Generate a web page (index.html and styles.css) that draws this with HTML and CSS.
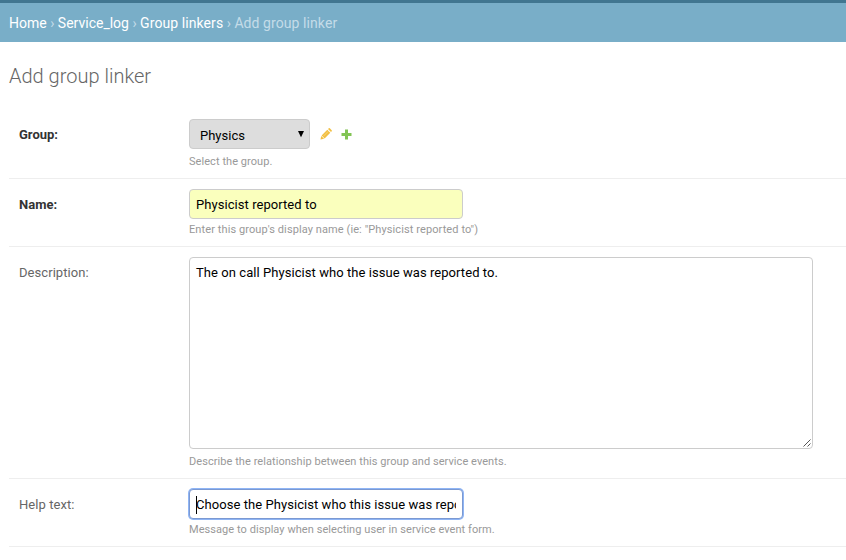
FILE: index.html
```html
<!DOCTYPE html>
<html lang="en">
<head>
<meta charset="utf-8">
<title>Add group linker</title>
<link rel="stylesheet" href="styles.css">
</head>
<body>
<nav class="breadcrumbs"><a>Home</a> › <a>Service_log</a> › <a class="parent">Group linkers</a> › <span class="current">Add group linker</span></nav>
<main>
<h1>Add group linker</h1>
<form>
<div class="row group-row">
  <label class="required">Group:</label>
  <div class="field">
    <div class="related">
      <div class="select"><span>Physics</span><svg width="8" height="8" viewBox="0 0 8 8"><path d="M1 1h6L4 7.300z"/></svg></div>
      <svg class="pencil" width="12" height="12" viewBox="0 0 12 12"><path fill="#f2bf42" d="M0.5 11.5l.7-3.600 2.900 2.900zM1.600 7.400l5.700-5.700 3 3-5.700 5.700zM8 1l.8-.7q.5-.4 1 0l1.900 1.900q.4.5 0 1L11 4z"/><path stroke="#f8dc91" stroke-width=".7" d="M3.3 8.3l5-5"/></svg>
      <svg class="plus" width="11" height="11" viewBox="0 0 11 11"><path fill="#82c454" d="M4 .5h3V4h3.5v3H7v3.500H4V7H.5V4H4z"/></svg>
    </div>
    <p class="help">Select the group.</p>
  </div>
</div>
<div class="row">
  <label class="required">Name:</label>
  <div class="field">
    <div class="input filled">Physicist reported to</div>
    <p class="help name-help">Enter this group's display name (ie: "Physicist reported to")</p>
  </div>
</div>
<div class="row description">
  <label>Description:</label>
  <div class="field">
    <div class="textarea">The on call Physicist who the issue was reported to.<svg class="grip" width="8" height="8" viewBox="0 0 8 8"><path d="M.5 7.500l7-7M4.500 7.500l3-3" stroke="#555" stroke-width="1"/></svg></div>
    <p class="help">Describe the relationship between this group and service events.</p>
  </div>
</div>
<div class="row">
  <label>Help text:</label>
  <div class="field">
    <div class="input focused"><span class="value">Choose the Physicist who this issue was reported to.</span></div>
    <p class="help">Message to display when selecting user in service event form.</p>
  </div>
</div>
</form>
</main>
</body>
</html>
```
FILE: styles.css
```css
* { box-sizing: border-box; }
body {
  margin: 0;
  height: 560px;
  overflow: hidden;
  background: #fff;
  color: #666;
  font: 13px/20px Roboto, "Liberation Sans", sans-serif;
}
.breadcrumbs {
  height: 42px;
  padding: 10px 9px 0;
  border-top: 3px solid #417690;
  background: #79aec8;
  color: #c4dce8;
  font-size: 14px;
  white-space: nowrap;
}
.breadcrumbs a { color: #fff; }
.breadcrumbs .parent { letter-spacing: .08px; }
.breadcrumbs .current { letter-spacing: .08px; }
main { padding-left: 9px; }
h1 {
  margin: 0;
  height: 67px;
  padding-top: 22px;
  font-size: 20px;
  line-height: 24px;
  font-weight: 300;
}
.row {
  display: flex;
  height: 68px;
  padding: 10px 10px 0;
  border-bottom: 1px solid #eee;
}
.group-row { height: 70px; }
.description { height: 232px; }
label { width: 170px; padding-top: 6px; flex: none; letter-spacing: .06px; }
.required { color: #333; font-weight: 700; letter-spacing: 0; }
.related { display: flex; align-items: center; height: 30px; }
.select {
  display: flex;
  align-items: center;
  justify-content: space-between;
  width: 121px;
  height: 30px;
  padding: 4px 4px 0 10px;
  border: 1px solid #ccc;
  border-radius: 4px;
  background: #ddd;
  color: #000;
}
.select svg { margin-top: -4px; }
.pencil { margin-left: 10px; }
.plus { margin-left: 9px; }
.input, .textarea {
  border: 1px solid #ccc;
  border-radius: 4px;
  background: #fff;
  color: #000;
  white-space: nowrap;
  letter-spacing: .06px;
}
.input { width: 274px; height: 30px; padding: 5px 6px 0; }
.filled { background: #faffbd; }
.focused {
  position: relative;
  border-color: #7b99d2;
  box-shadow: 0 0 0 1px #8fb5f5;
}
.focused::before {
  content: "";
  position: absolute;
  left: 6px;
  top: 6px;
  width: 1px;
  height: 18px;
  background: #000;
}
.value { display: block; overflow: hidden; }
.textarea { position: relative; width: 624px; height: 192px; padding: 5px 6px; }
.grip { position: absolute; right: 1px; bottom: 1px; }
.help { margin: 4px 0 0; color: #999; font-size: 11px; line-height: 18px; letter-spacing: .06px; }
.input + .help { margin-top: 2px; }
.input + .name-help { letter-spacing: .095px; }
.textarea + .help { margin-top: 4px; }
```
